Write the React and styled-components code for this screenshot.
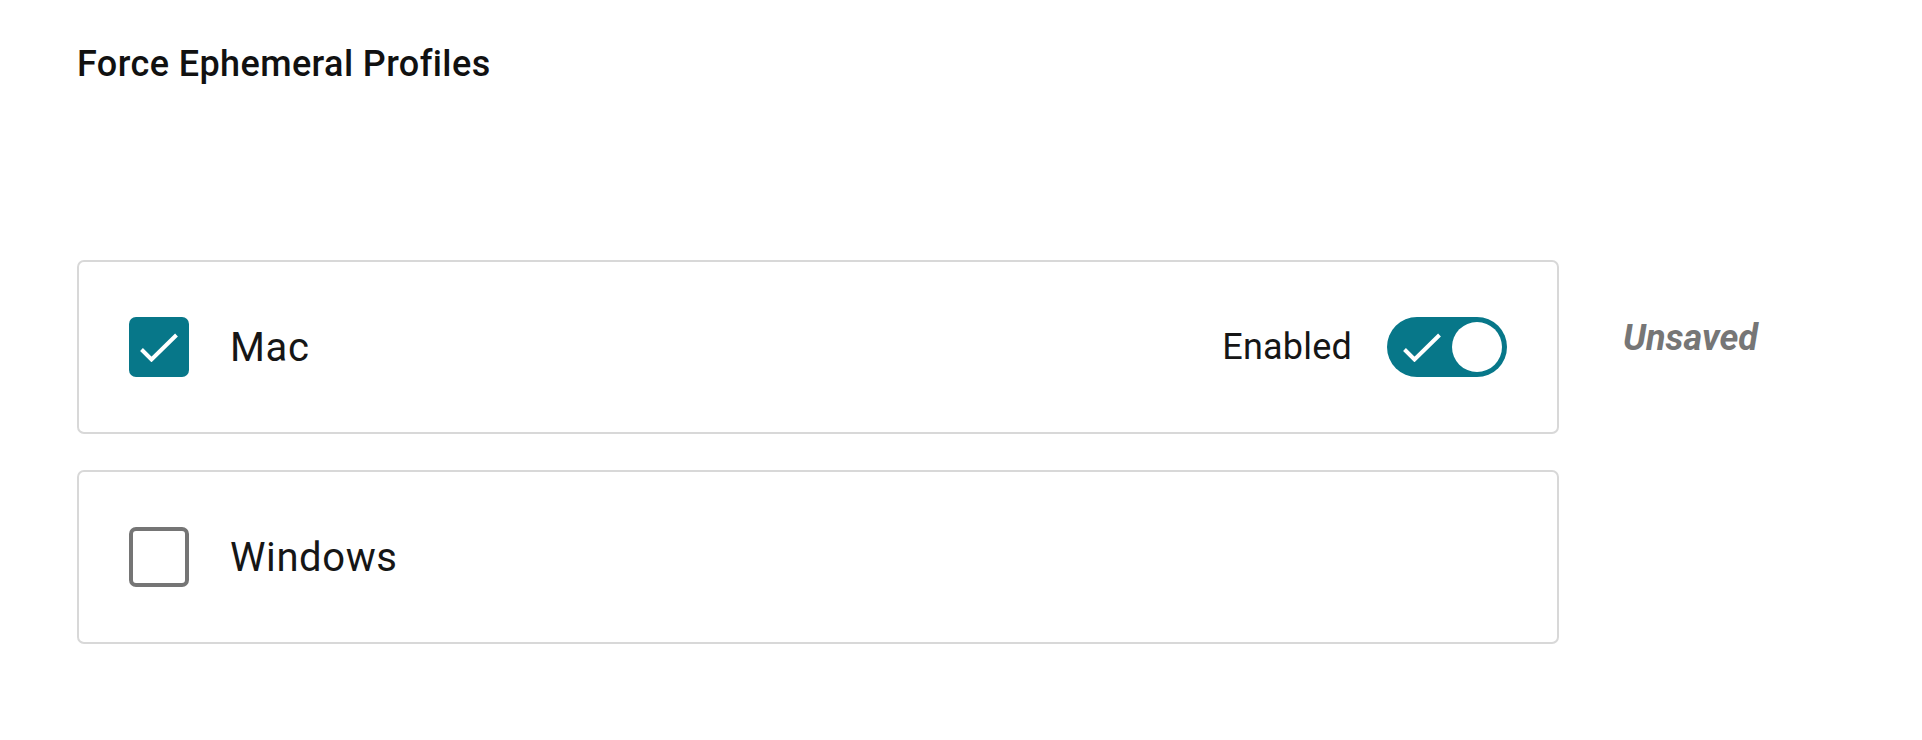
import React from 'react';
import styled, { createGlobalStyle } from 'styled-components';

const teal = '#077789';

const GlobalStyle = createGlobalStyle`
    html, body {
        margin: 0;
        padding: 0;
        background: #fff;
    }
    body {
        font-family: Roboto, 'Liberation Sans', sans-serif;
        color: #161616;
    }
`
const Page = styled.main`
    padding: 43px 0 0 77px;
`
const Title = styled.h2`
    margin: 0 0 174px 0;
    font-size: 36px;
    line-height: 43px;
    font-weight: 500;
    letter-spacing: 0.4px;
    color: #111;
`
const List = styled.ul`
    list-style: none;
    margin: 0;
    padding: 0;
    display: flex;
    flex-direction: column;
    gap: 36px;
`
const Row = styled.li`
    display: flex;
    align-items: flex-start;
    gap: 64px;
`
const Card = styled.div`
    box-sizing: border-box;
    width: 1482px;
    height: 174px;
    border: 2px solid #d8d8d8;
    border-radius: 7px;
    padding: 0 50px;
    display: flex;
    align-items: center;
`
const Box = styled.span`
    box-sizing: border-box;
    width: 60px;
    height: 60px;
    flex: none;
    border-radius: 7px;
    display: flex;
    align-items: center;
    justify-content: center;
    background: ${p => p.$checked ? teal : '#fff'};
    border: ${p => p.$checked ? 'none' : '4px solid #757575'};
`
const Label = styled.span`
    margin-left: 41px;
    font-size: 40px;
    font-weight: 400;
    letter-spacing: 0.6px;
`
const Toggle = styled.div`
    margin-left: auto;
    display: flex;
    align-items: center;
    gap: 35px;
    span {
        font-size: 36px;
        letter-spacing: 0.2px;
    }
`
const Track = styled.span`
    box-sizing: border-box;
    width: 120px;
    height: 60px;
    border-radius: 30px;
    background: ${teal};
    display: flex;
    align-items: center;
    padding: 0 5px 0 16px;
`
const Knob = styled.i`
    width: 50px;
    height: 50px;
    margin-left: auto;
    border-radius: 50%;
    background: #fff;
`
const Status = styled.span`
    padding-top: 57px;
    font-size: 36px;
    font-style: italic;
    font-weight: 700;
    color: #767676;
`

const Check = () => (
    <svg width="38" height="29" viewBox="0 0 38 29">
        <path d="M1.5 16.5 L11.5 26.5 L36.5 2" fill="none" stroke="#fff" strokeWidth="4" />
    </svg>
);

const platforms = [
    { name: 'Mac', checked: true, status: 'Unsaved' },
    { name: 'Windows', checked: false },
];

const App = () => (
    <>
        <GlobalStyle />
        <Page>
            <Title>Force Ephemeral Profiles</Title>
            <List>
                {platforms.map(p => (
                    <Row key={p.name}>
                        <Card>
                            <Box $checked={p.checked}>{p.checked && <Check />}</Box>
                            <Label>{p.name}</Label>
                            {p.checked && (
                                <Toggle>
                                    <span>Enabled</span>
                                    <Track>
                                        <Check />
                                        <Knob />
                                    </Track>
                                </Toggle>
                            )}
                        </Card>
                        {p.status && <Status>{p.status}</Status>}
                    </Row>
                ))}
            </List>
        </Page>
    </>
);

export default App;
